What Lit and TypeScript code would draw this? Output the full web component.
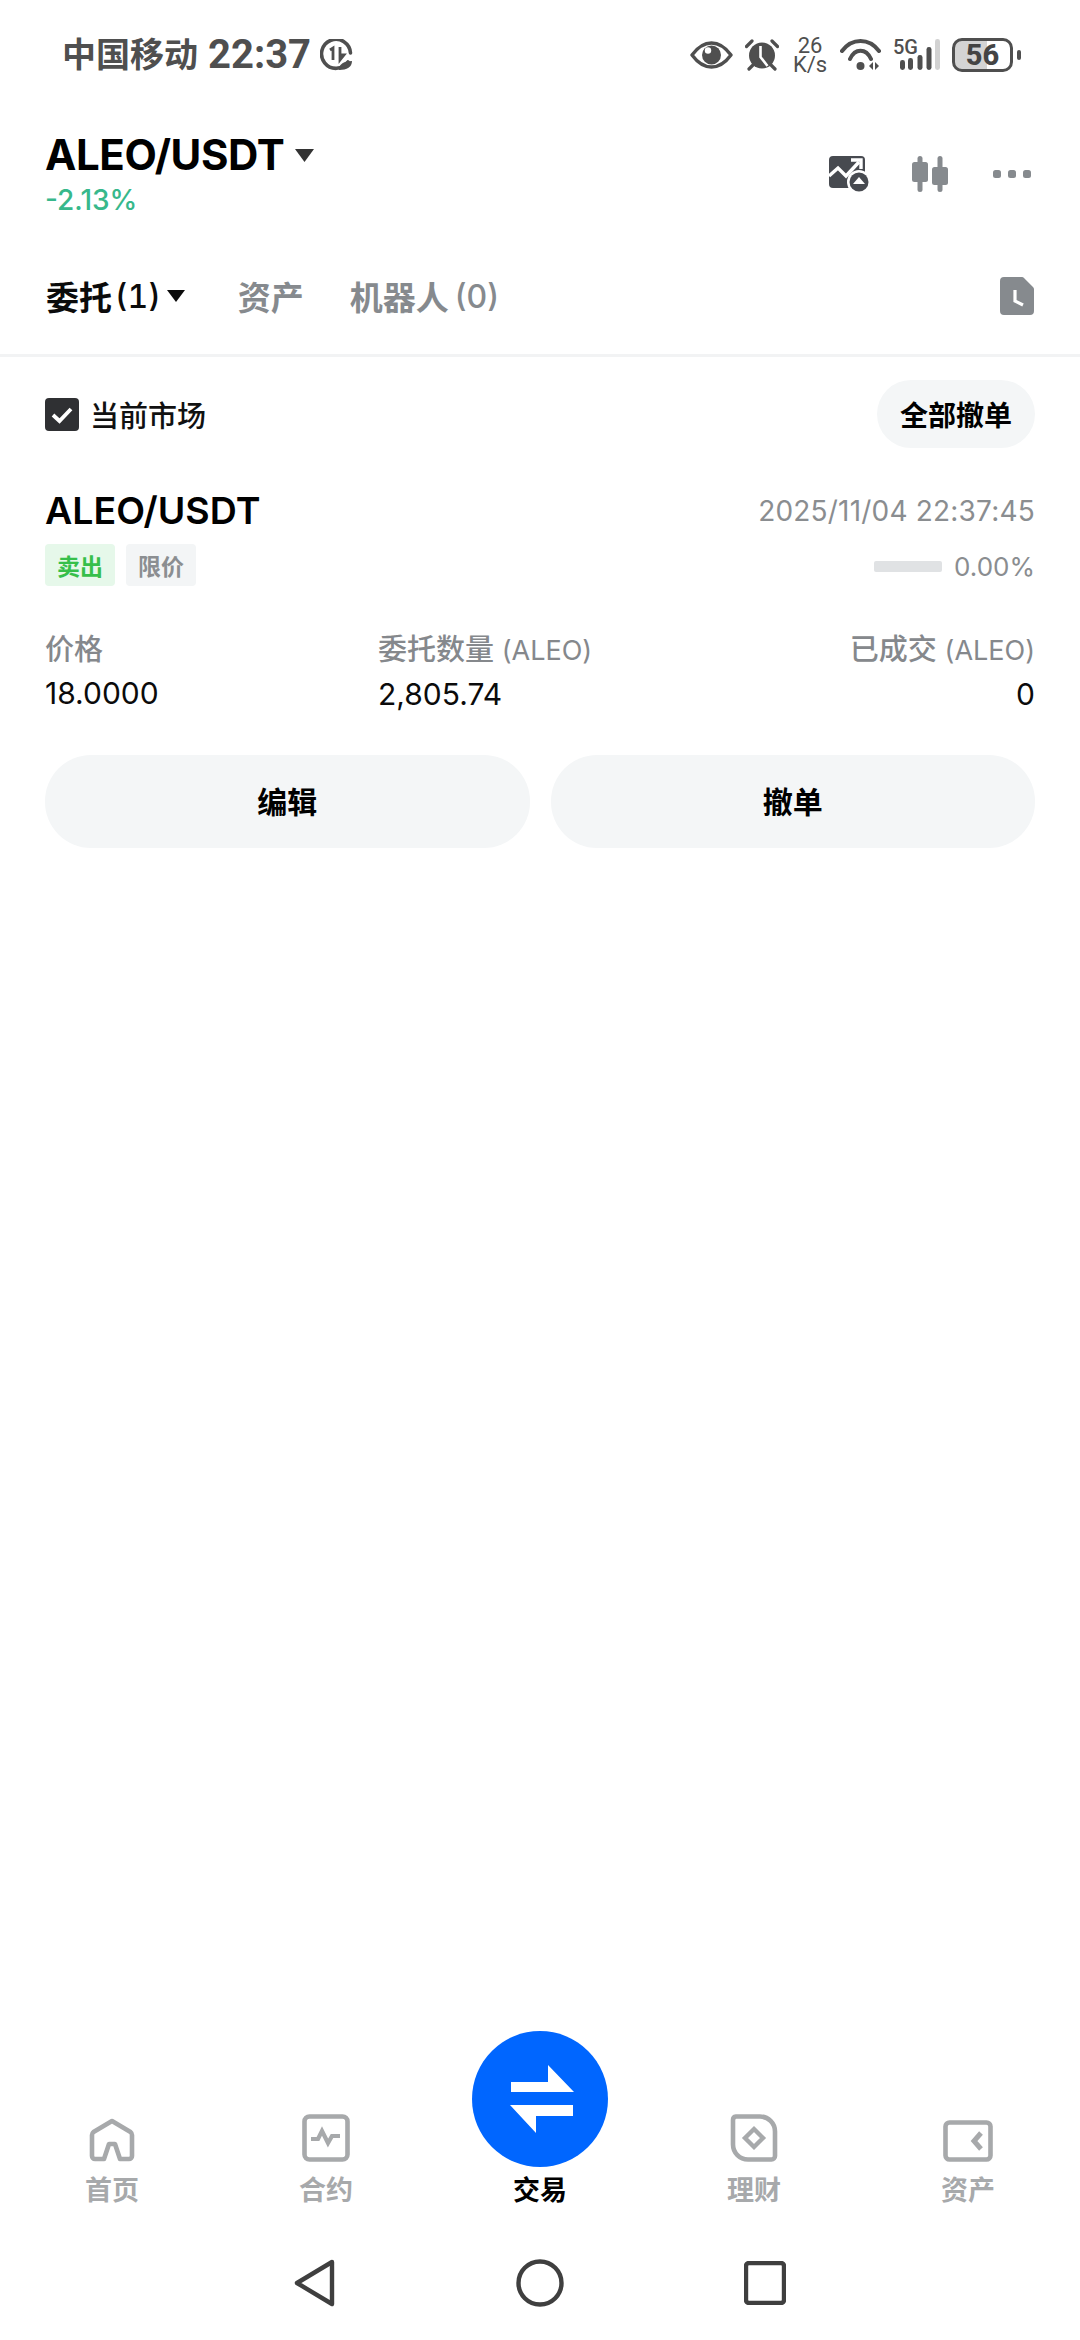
import { LitElement, html, css, svg } from "lit";
import { customElement } from "lit/decorators.js";

const SANS = css`"Inter", "Noto Sans CJK SC", sans-serif`;

const navItems = [
  { label: "首页", icon: svg`<svg class="ni" width="46" height="44" viewBox="0 0 46 44"><path d="M15 41H6a3 3 0 0 1-3-3V17a4 4 0 0 1 1.500-3L23 3l18.500 11a4 4 0 0 1 1.500 3v21a3 3 0 0 1-3 3h-9L26 26h-6z" fill="none" stroke="#a7a9ab" stroke-width="4.600" stroke-linejoin="round"/></svg>` },
  { label: "合约", icon: svg`<svg class="ni" width="48" height="48" viewBox="0 0 48 48"><rect x="2.500" y="2.500" width="43" height="43" rx="5" fill="none" stroke="#a7a9ab" stroke-width="4.600"/><path d="M9 25h7l4-8 6 12 4-7h8" fill="none" stroke="#a7a9ab" stroke-width="4.200"/></svg>` },
  { label: "交易", active: true, icon: svg`<svg class="trade" width="136" height="136" viewBox="0 0 136 136"><circle cx="68" cy="68" r="68" fill="#0066ff"/><path d="M39 51h37V34l26 27H39z" fill="#fff"/><path d="M101 74v11H64v17L38 74z" fill="#fff"/></svg>` },
  { label: "理财", icon: svg`<svg class="ni" width="48" height="48" viewBox="0 0 48 48"><path d="M6 2.500h24a15 15 0 0 1 15 15V42a3.500 3.500 0 0 1-3.500 3.500H18a15 15 0 0 1-15-15V6A3.500 3.500 0 0 1 6 2.500z" fill="none" stroke="#a7a9ab" stroke-width="4.600"/><path d="M24 15l9 9-9 9-9-9z" fill="none" stroke="#a7a9ab" stroke-width="4.400"/></svg>` },
  { label: "资产", icon: svg`<svg class="ni" width="50" height="42" viewBox="0 0 50 42"><rect x="2.500" y="2.500" width="45" height="37" rx="4" fill="none" stroke="#a7a9ab" stroke-width="4.600"/><path d="M38 13l-7 8 7 8" fill="none" stroke="#a7a9ab" stroke-width="5"/></svg>` },
];

@customElement("app-root")
export class AppRoot extends LitElement {
  static styles = css`
    :host {
      display: flex;
      flex-direction: column;
      width: 1080px;
      height: 2340px;
      background: #fff;
      color: #000;
      font-family: ${SANS};
      overflow: hidden;
    }
    svg { display: block; flex: none; }

    .status {
      display: flex;
      justify-content: space-between;
      align-items: center;
      height: 36px;
      padding: 37px 59px 0 62px;
      margin-bottom: -1px;
      color: #4f4f4f;
    }
    .status-left { display: flex; align-items: center; }
    .carrier { font-size: 34px; font-weight: 600; line-height: 36px; margin-right: 10px; }
    .clock { font-family: "Roboto", sans-serif; font-size: 40px; font-weight: 700; line-height: 36px; margin-right: 9px; }
    .status-right { display: flex; align-items: center; }
    .eye { margin-right: 12px; }
    .speed {
      display: flex; flex-direction: column; align-items: center;
      width: 32px; margin: 0 14px 0 15px;
      font-family: "Roboto", sans-serif; font-size: 22px; line-height: 19px; color: #4f4f4f;
    }
    .signal { margin: -4px 0 0 12px; }
    .battery-wrap { display: flex; align-items: center; margin-left: 12px; }
    .battery {
      box-sizing: border-box;
      width: 61px; height: 34px;
      border: 3px solid #4f4f4f; border-radius: 10px;
      background: linear-gradient(90deg, #d4d4d4 0 58%, #fff 58%);
      display: flex; align-items: center; justify-content: center;
      font-family: "Roboto", sans-serif; font-size: 29px; font-weight: 800; color: #444;
    }
    .nub { width: 4px; height: 10px; background: #4f4f4f; border-radius: 2px; margin-left: 4px; }

    .header {
      display: flex; justify-content: space-between;
      height: 168px; box-sizing: border-box;
      padding: 58px 49px 0 45px;
    }
    .pair { display: flex; align-items: center; gap: 11px; font-size: 42px; font-weight: 700; line-height: 50px; letter-spacing: -0.4px; }
    .chg { font-size: 28px; font-weight: 500; line-height: 30px; color: #37b88b; margin-top: 5px; }
    .actions { display: flex; align-items: center; height: 62px; padding-top: 13px; }
    .chart { margin-right: 43px; }
    .candle { margin-right: 45px; }

    .tabs {
      display: flex; align-items: center;
      height: 117px; box-sizing: border-box;
      padding: 0 47px 2px 46px;
      font-size: 33px; font-weight: 600;
      border-bottom: 3px solid #f2f3f4;
      color: #868a8e;
    }
    .tab { display: flex; align-items: center; gap: 6px; margin-right: 46px; }
    .tab.on { color: #0b0b0b; margin-right: 53px; gap: 3px; }
    .tab small { font-size: 32px; font-weight: 500; }
    .tab.on small { font-variant-numeric: tabular-nums; }
    .tab svg { margin-left: 3px; }
    .doc { margin-left: auto; margin-right: -1px; }

    .filter {
      display: flex; justify-content: space-between; align-items: center;
      padding: 23px 45px 0 45px;
    }
    .check { display: flex; align-items: center; gap: 11px; font-size: 29px; font-weight: 500; color: #111; }
    .pill {
      display: flex; align-items: center; height: 68px; padding: 0 23px;
      border-radius: 34px; background: #f4f6f7;
      font-size: 28px; font-weight: 600;
    }

    .order { padding: 39px 45px 0 45px; }
    .row { display: flex; justify-content: space-between; align-items: center; }
    .name { font-size: 37.500px; font-weight: 600; line-height: 48px; }
    .date { font-size: 28px; color: #8a8d90; line-height: 40px; letter-spacing: 0.2px; }
    .row2 { margin-top: 9px; }
    .tags { display: flex; gap: 11px; }
    .tag {
      width: 70px; height: 42px; display: flex; align-items: center; justify-content: center;
      font-size: 23px; font-weight: 600; border-radius: 4px;
    }
    .sell { background: #e6f8ea; color: #36bf4a; }
    .limit { background: #f3f5f6; color: #8b8e91; }
    .fill { display: flex; align-items: center; gap: 12px; font-size: 26px; color: #8a8d90; padding-top: 3px; }
    .bar { width: 68px; height: 11px; border-radius: 2px; background: #e0e2e4; }

    .cols {
      display: grid; grid-template-columns: 333px 1fr auto;
      margin-top: 44px;
    }
    .cols > div { display: flex; flex-direction: column; }
    .cols .end { align-items: flex-end; }
    .lbl { font-size: 29px; font-weight: 500; line-height: 40px; color: #85888c; }
    .lbl span { font-size: 27px; font-weight: 400; }
    .val { font-size: 30px; line-height: 36px; color: #0b0b0b; margin-top: 5px; }

    .btns { display: grid; grid-template-columns: 1fr 1fr; gap: 21px; margin-top: 43px; }
    .btn {
      height: 93px; box-sizing: border-box; padding-bottom: 3px;
      display: flex; align-items: center; justify-content: center;
      border-radius: 46px; background: #f4f6f7;
      font-size: 30px; font-weight: 700;
    }

    .spacer { flex: 1; }

    .tabbar {
      display: grid; grid-template-columns: repeat(5, 1fr);
      align-items: end;
      padding: 0 5px;
    }
    .nav-item {
      display: flex; flex-direction: column; align-items: center;
      font-size: 27px; font-weight: 600; line-height: 36px; color: #a7a9ab;
    }
    .nav-item.on { color: #000; }
    .nav-item span { margin-top: 11px; }
    .nav-item.on span { margin-top: 6px; }

    .sysbar {
      display: flex; justify-content: center; align-items: center;
      gap: 180px;
      height: 125px; padding-top: 10px; margin-top: 6px; box-sizing: border-box;
    }
  `;

  render() {
    return html`
      <div class="status">
        <div class="status-left">
          <span class="carrier">中国移动</span>
          <span class="clock">22:37</span>
          <svg width="33" height="33" viewBox="0 0 33 33">
            <path d="M28 23A14.500 14.500 0 1 1 30.500 14" fill="none" stroke="#4f4f4f" stroke-width="3.600" stroke-linecap="round"/>
            <path d="M10 11l3-2v12M20 8v13M20 21l4-5h-4z" fill="none" stroke="#4f4f4f" stroke-width="2.800"/>
            <path d="M19 31c0-6 5-9 13-9c0 6-5 9-13 9z" fill="#4f4f4f"/>
          </svg>
        </div>
        <div class="status-right">
          <svg class="eye" width="43" height="28" viewBox="0 0 43 28">
            <path d="M2 14C9 4.500 15 2 21.500 2S34 4.500 41 14C34 23.500 28 26 21.500 26S9 23.500 2 14Z" fill="none" stroke="#4f4f4f" stroke-width="3.400" stroke-linejoin="round"/>
            <circle cx="21.500" cy="14" r="9.500" fill="#4f4f4f"/>
            <circle cx="18" cy="9.500" r="3.200" fill="#fff"/>
          </svg>
          <svg width="34" height="32" viewBox="0 0 34 32">
            <circle cx="17" cy="16.500" r="13" fill="#4f4f4f"/>
            <path d="M15.500 7v11l7 9" fill="none" stroke="#fff" stroke-width="2.600"/>
            <path d="M1.500 7.500L7 2M32.500 7.500L27 2M4 30l4-4M30 30l-4-4" fill="none" stroke="#4f4f4f" stroke-width="3.200" stroke-linecap="round"/>
          </svg>
          <div class="speed"><span>26</span><span>K/s</span></div>
          <svg width="41" height="32" viewBox="0 0 41 32">
            <path d="M2 12C12 -1.300 29 -1.300 39 12M10 20C15 9 26 9 31 20" fill="none" stroke="#4f4f4f" stroke-width="4" stroke-linecap="round"/>
            <circle cx="20.500" cy="27" r="4" fill="#4f4f4f"/>
            <path d="M33 23v8l-4-4zM35 23v8l4-4z" fill="#4f4f4f"/>
          </svg>
          <svg class="signal" width="47" height="36" viewBox="0 -4 47 36">
            <text x="0" y="15" font-family="Roboto, sans-serif" font-size="20" font-weight="500" fill="#4f4f4f">5G</text>
            <rect x="7" y="21" width="5" height="10" rx="2.400" fill="#4f4f4f"/>
            <rect x="15" y="19" width="5" height="12" rx="2.400" fill="#4f4f4f"/>
            <rect x="24.500" y="16" width="5" height="15" rx="2.400" fill="#4f4f4f"/>
            <rect x="33.500" y="8" width="5" height="23" rx="2.400" fill="#4f4f4f"/>
            <rect x="42" y="0" width="5" height="31" rx="2.400" fill="#d2d2d2"/>
          </svg>
          <div class="battery-wrap">
            <div class="battery">56</div>
            <div class="nub"></div>
          </div>
        </div>
      </div>

      <div class="header">
        <div>
          <div class="pair">ALEO/USDT
            <svg width="19" height="13" viewBox="0 0 19 13"><path d="M0 0h19L9.500 13z" fill="#333"/></svg>
          </div>
          <div class="chg">-2.13%</div>
        </div>
        <div class="actions">
          <svg class="chart" width="40" height="37" viewBox="0 0 40 37">
            <rect x="0" y="0" width="36" height="32" rx="4" fill="#474a50"/>
            <path d="M0 20l9-8 8 8L30 6" fill="none" stroke="#fff" stroke-width="3.400"/>
            <path d="M22 4h10v9" fill="none" stroke="#fff" stroke-width="3.400"/>
            <circle cx="30" cy="26" r="12" fill="#fff"/>
            <circle cx="30" cy="26" r="9.500" fill="#474a50"/>
            <path d="M30 21l6 7H24z" fill="#fff"/>
          </svg>
          <svg class="candle" width="36" height="36" viewBox="0 0 36 36">
            <rect x="5.500" y="0" width="5" height="36" rx="2.500" fill="#868a8e"/>
            <rect x="0" y="6" width="16" height="20" rx="2.500" fill="#868a8e"/>
            <rect x="25.500" y="0" width="5" height="36" rx="2.500" fill="#868a8e"/>
            <rect x="20" y="11" width="16" height="18" rx="2.500" fill="#868a8e"/>
          </svg>
          <svg width="38" height="8" viewBox="0 0 38 8">
            <rect x="0" y="0" width="8" height="8" rx="2.500" fill="#868a8e"/>
            <rect x="15" y="0" width="8" height="8" rx="2.500" fill="#868a8e"/>
            <rect x="30" y="0" width="8" height="8" rx="2.500" fill="#868a8e"/>
          </svg>
        </div>
      </div>

      <div class="tabs">
        <div class="tab on">委托<small>(1)</small>
          <svg width="18" height="12" viewBox="0 0 18 12"><path d="M0 0h18L9 12z" fill="#0b0b0b"/></svg>
        </div>
        <div class="tab">资产</div>
        <div class="tab">机器人<small>(0)</small></div>
        <svg class="doc" width="34" height="38" viewBox="0 0 34 38">
          <path d="M4 0h18a3 3 0 0 1 2 1l9 9a3 3 0 0 1 1 2v22a4 4 0 0 1-4 4H4a4 4 0 0 1-4-4V4a4 4 0 0 1 4-4z" fill="#868a8e"/>
          <path d="M15 13v11l8 4" fill="none" stroke="#fff" stroke-width="3.200"/>
        </svg>
      </div>

      <div class="filter">
        <div class="check">
          <svg width="34" height="33" viewBox="0 0 34 33">
            <rect width="34" height="33" rx="4" fill="#2f3033"/>
            <path d="M8 17l6.500 6L26 11" fill="none" stroke="#fff" stroke-width="3.800"/>
          </svg>
          当前市场
        </div>
        <div class="pill">全部撤单</div>
      </div>

      <div class="order">
        <div class="row">
          <div class="name">ALEO/USDT</div>
          <div class="date">2025/11/04 22:37:45</div>
        </div>
        <div class="row row2">
          <div class="tags">
            <div class="tag sell">卖出</div>
            <div class="tag limit">限价</div>
          </div>
          <div class="fill"><div class="bar"></div>0.00%</div>
        </div>
        <div class="cols">
          <div>
            <div class="lbl">价格</div>
            <div class="val">18.0000</div>
          </div>
          <div>
            <div class="lbl">委托数量 <span>(ALEO)</span></div>
            <div class="val">2,805.74</div>
          </div>
          <div class="end">
            <div class="lbl">已成交 <span>(ALEO)</span></div>
            <div class="val">0</div>
          </div>
        </div>
        <div class="btns">
          <div class="btn">编辑</div>
          <div class="btn">撤单</div>
        </div>
      </div>

      <div class="spacer"></div>

      <div class="tabbar">
        ${navItems.map(
          (n) => html`<div class="nav-item ${n.active ? "on" : ""}">${n.icon}<span>${n.label}</span></div>`
        )}
      </div>

      <div class="sysbar">
        <svg width="42" height="48" viewBox="0 0 42 48">
          <path d="M38 3L3 24l35 21z" fill="none" stroke="#3f3f3f" stroke-width="4.400" stroke-linejoin="round"/>
        </svg>
        <svg width="48" height="48" viewBox="0 0 48 48">
          <circle cx="24" cy="24" r="21.500" fill="none" stroke="#3f3f3f" stroke-width="4.400"/>
        </svg>
        <svg width="42" height="44" viewBox="0 0 42 44">
          <rect x="2" y="2" width="38" height="40" rx="3" fill="none" stroke="#3f3f3f" stroke-width="4.400"/>
        </svg>
      </div>
    `;
  }
}
